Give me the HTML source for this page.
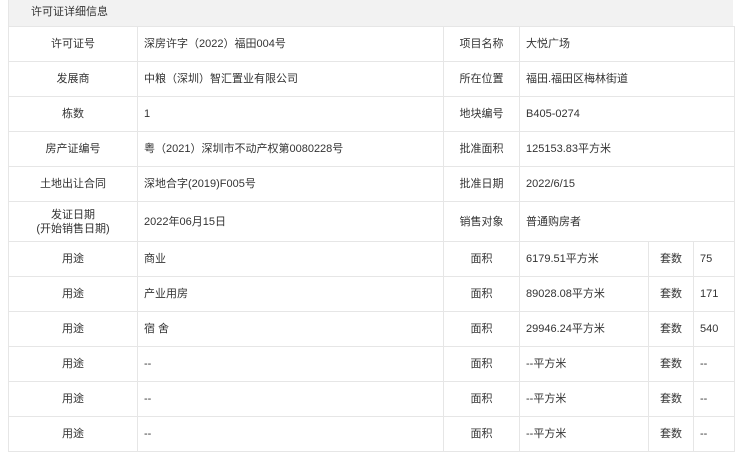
<!DOCTYPE html>
<html><head><meta charset="utf-8"><style>
body{margin:0;background:#fff;font-family:"Liberation Sans","Noto Sans CJK SC",sans-serif;font-size:11px;color:#333;}
.wrap{position:absolute;left:8px;top:0;width:725px;}
.hd{height:26px;background:#f2f2f2;line-height:24px;padding-left:22px;box-sizing:border-box;border-left:1px solid #e6e6e6;}
table{border-collapse:collapse;width:726px;table-layout:fixed;}
td{border:1px solid #e6e6e6;height:35px;padding:0 0 0 6px;box-sizing:border-box;vertical-align:middle;white-space:nowrap;overflow:hidden;line-height:14px;}
td span{display:inline-block;line-height:14px;vertical-align:middle;}
td.l{text-align:center;padding:0;}
tr.t td{height:40px;line-height:14px;}
</style></head><body>
<div class="wrap">
<div class="hd">许可证详细信息</div>
<table>
<colgroup><col style="width:129px"><col style="width:306px"><col style="width:76px"><col style="width:129px"><col style="width:45px"><col style="width:41px"></colgroup>
<tr><td class="l">许可证号</td><td>深房许字（2022）福田004号</td><td class="l">项目名称</td><td colspan="3">大悦广场</td></tr>
<tr><td class="l">发展商</td><td>中粮（深圳）智汇置业有限公司</td><td class="l">所在位置</td><td colspan="3">福田.福田区梅林街道</td></tr>
<tr><td class="l">栋数</td><td>1</td><td class="l">地块编号</td><td colspan="3">B405-0274</td></tr>
<tr><td class="l">房产证编号</td><td>粤（2021）深圳市不动产权第0080228号</td><td class="l">批准面积</td><td colspan="3">125153.83平方米</td></tr>
<tr><td class="l">土地出让合同</td><td>深地合字(2019)F005号</td><td class="l">批准日期</td><td colspan="3">2022/6/15</td></tr>
<tr class="t"><td class="l">发证日期<br>(开始销售日期)</td><td>2022年06月15日</td><td class="l">销售对象</td><td colspan="3">普通购房者</td></tr>
<tr><td class="l">用途</td><td>商业</td><td class="l">面积</td><td>6179.51平方米</td><td class="l">套数</td><td>75</td></tr>
<tr><td class="l">用途</td><td>产业用房</td><td class="l">面积</td><td>89028.08平方米</td><td class="l">套数</td><td>171</td></tr>
<tr><td class="l">用途</td><td>宿 舍</td><td class="l">面积</td><td>29946.24平方米</td><td class="l">套数</td><td>540</td></tr>
<tr><td class="l">用途</td><td>--</td><td class="l">面积</td><td>--平方米</td><td class="l">套数</td><td>--</td></tr>
<tr><td class="l">用途</td><td>--</td><td class="l">面积</td><td>--平方米</td><td class="l">套数</td><td>--</td></tr>
<tr><td class="l">用途</td><td>--</td><td class="l">面积</td><td>--平方米</td><td class="l">套数</td><td>--</td></tr>
</table>
</div>
</body></html>
